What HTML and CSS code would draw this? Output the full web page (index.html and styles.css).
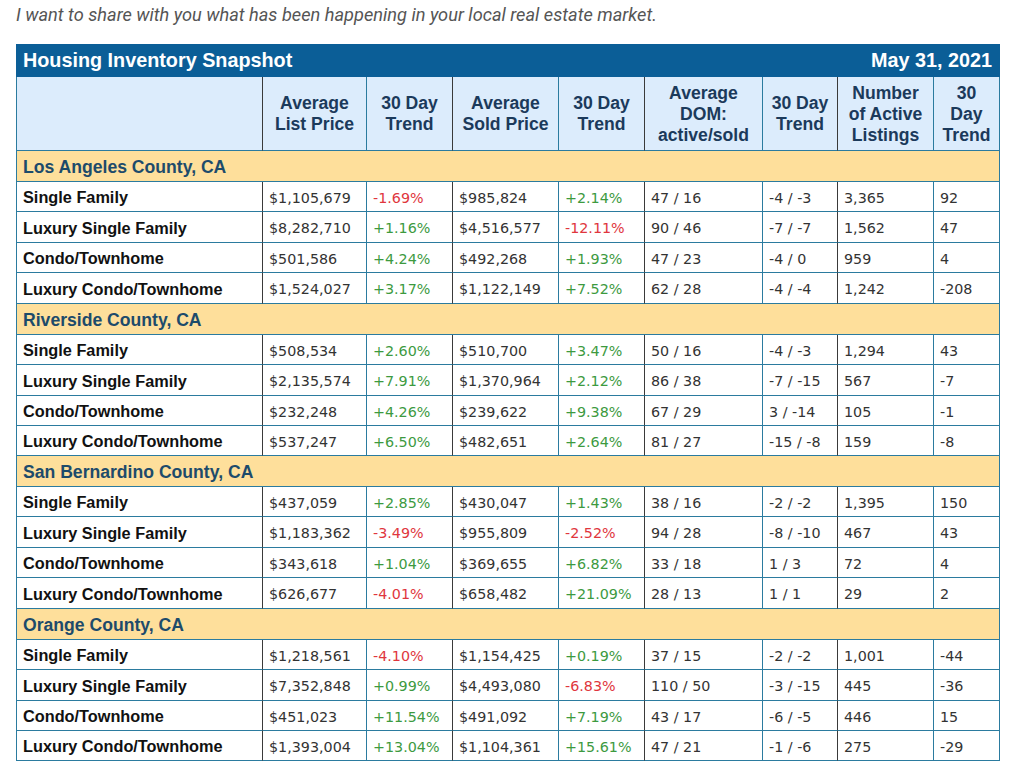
FILE: index.html
```html
<!DOCTYPE html>
<html lang="en">
<head>
<meta charset="utf-8">
<title>Housing Inventory Snapshot</title>
<link rel="stylesheet" href="styles.css">
</head>
<body>
<p class="intro">I want to share with you what has been happening in your local real estate market.</p>
<div class="snapshot">
  <div class="title-bar">
    <span>Housing Inventory Snapshot</span>
    <span>May 31, 2021</span>
  </div>
  <table class="grid">
    <colgroup>
      <col class="c1"><col class="c2"><col class="c3"><col class="c4"><col class="c5"><col class="c6"><col class="c7"><col class="c8"><col class="c9">
    </colgroup>
    <thead>
      <tr class="head">
        <th></th>
        <th>Average<br>List Price</th>
        <th>30 Day<br>Trend</th>
        <th>Average<br>Sold Price</th>
        <th>30 Day<br>Trend</th>
        <th>Average<br>DOM:<br>active/sold</th>
        <th>30 Day<br>Trend</th>
        <th>Number<br>of Active<br>Listings</th>
        <th>30<br>Day<br>Trend</th>
      </tr>
    </thead>
    <tbody>
      <tr class="section"><td colspan="9">Los Angeles County, CA</td></tr>
      <tr><td>Single Family</td><td>$1,105,679</td><td class="dn">-1.69%</td><td>$985,824</td><td class="up">+2.14%</td><td>47 / 16</td><td>-4 / -3</td><td>3,365</td><td>92</td></tr>
      <tr><td>Luxury Single Family</td><td>$8,282,710</td><td class="up">+1.16%</td><td>$4,516,577</td><td class="dn">-12.11%</td><td>90 / 46</td><td>-7 / -7</td><td>1,562</td><td>47</td></tr>
      <tr><td>Condo/Townhome</td><td>$501,586</td><td class="up">+4.24%</td><td>$492,268</td><td class="up">+1.93%</td><td>47 / 23</td><td>-4 / 0</td><td>959</td><td>4</td></tr>
      <tr><td>Luxury Condo/Townhome</td><td>$1,524,027</td><td class="up">+3.17%</td><td>$1,122,149</td><td class="up">+7.52%</td><td>62 / 28</td><td>-4 / -4</td><td>1,242</td><td>-208</td></tr>

      <tr class="section"><td colspan="9">Riverside County, CA</td></tr>
      <tr><td>Single Family</td><td>$508,534</td><td class="up">+2.60%</td><td>$510,700</td><td class="up">+3.47%</td><td>50 / 16</td><td>-4 / -3</td><td>1,294</td><td>43</td></tr>
      <tr><td>Luxury Single Family</td><td>$2,135,574</td><td class="up">+7.91%</td><td>$1,370,964</td><td class="up">+2.12%</td><td>86 / 38</td><td>-7 / -15</td><td>567</td><td>-7</td></tr>
      <tr><td>Condo/Townhome</td><td>$232,248</td><td class="up">+4.26%</td><td>$239,622</td><td class="up">+9.38%</td><td>67 / 29</td><td>3 / -14</td><td>105</td><td>-1</td></tr>
      <tr><td>Luxury Condo/Townhome</td><td>$537,247</td><td class="up">+6.50%</td><td>$482,651</td><td class="up">+2.64%</td><td>81 / 27</td><td>-15 / -8</td><td>159</td><td>-8</td></tr>

      <tr class="section"><td colspan="9">San Bernardino County, CA</td></tr>
      <tr><td>Single Family</td><td>$437,059</td><td class="up">+2.85%</td><td>$430,047</td><td class="up">+1.43%</td><td>38 / 16</td><td>-2 / -2</td><td>1,395</td><td>150</td></tr>
      <tr><td>Luxury Single Family</td><td>$1,183,362</td><td class="dn">-3.49%</td><td>$955,809</td><td class="dn">-2.52%</td><td>94 / 28</td><td>-8 / -10</td><td>467</td><td>43</td></tr>
      <tr><td>Condo/Townhome</td><td>$343,618</td><td class="up">+1.04%</td><td>$369,655</td><td class="up">+6.82%</td><td>33 / 18</td><td>1 / 3</td><td>72</td><td>4</td></tr>
      <tr><td>Luxury Condo/Townhome</td><td>$626,677</td><td class="dn">-4.01%</td><td>$658,482</td><td class="up">+21.09%</td><td>28 / 13</td><td>1 / 1</td><td>29</td><td>2</td></tr>

      <tr class="section"><td colspan="9">Orange County, CA</td></tr>
      <tr><td>Single Family</td><td>$1,218,561</td><td class="dn">-4.10%</td><td>$1,154,425</td><td class="up">+0.19%</td><td>37 / 15</td><td>-2 / -2</td><td>1,001</td><td>-44</td></tr>
      <tr><td>Luxury Single Family</td><td>$7,352,848</td><td class="up">+0.99%</td><td>$4,493,080</td><td class="dn">-6.83%</td><td>110 / 50</td><td>-3 / -15</td><td>445</td><td>-36</td></tr>
      <tr><td>Condo/Townhome</td><td>$451,023</td><td class="up">+11.54%</td><td>$491,092</td><td class="up">+7.19%</td><td>43 / 17</td><td>-6 / -5</td><td>446</td><td>15</td></tr>
      <tr><td>Luxury Condo/Townhome</td><td>$1,393,004</td><td class="up">+13.04%</td><td>$1,104,361</td><td class="up">+15.61%</td><td>47 / 21</td><td>-1 / -6</td><td>275</td><td>-29</td></tr>
    </tbody>
  </table>
</div>
</body>
</html>
```

FILE: styles.css
```css
html, body {
  margin: 0;
  padding: 0;
  background: #ffffff;
}

body {
  font-family: "Liberation Sans", Arial, sans-serif;
}

.intro {
  box-sizing: border-box;
  margin: 0;
  height: 44px;
  padding: 3px 16px 0;
  font-family: Roboto, "Liberation Sans", sans-serif;
  font-style: italic;
  font-size: 18.2px;
  line-height: 24px;
  color: #555555;
}

.snapshot {
  margin-left: 16px;
  width: 984px;
}

.title-bar {
  box-sizing: border-box;
  display: flex;
  justify-content: space-between;
  align-items: center;
  height: 33px;
  padding: 0 8px 0 7px;
  background: #0b5e97;
  color: #ffffff;
  font-family: "Liberation Sans", Arial, sans-serif;
  font-weight: bold;
  font-size: 19.8px;
}

.grid {
  border-collapse: separate;
  border-spacing: 0;
  table-layout: fixed;
  width: 984px;
}

.c1 { width: 247px; }
.c2 { width: 104px; }
.c3 { width: 86px; }
.c4 { width: 106px; }
.c5 { width: 86px; }
.c6 { width: 118px; }
.c7 { width: 75px; }
.c8 { width: 96px; }
.c9 { width: 66px; }

.grid th,
.grid td {
  box-sizing: border-box;
  border-right: 1px solid #2b7b9f;
  border-bottom: 1px solid #2b7b9f;
  padding: 2px 0 0 6px;
  vertical-align: middle;
}

.grid th:first-child,
.grid td:first-child {
  border-left: 1px solid #2b7b9f;
  padding-left: 6px;
}

.grid tr > :nth-child(odd):not(:last-child) {
  border-right-color: #3a3a3a;
}

.head {
  height: 74px;
}

.grid th {
  background: #dcecfc;
  color: #1b3a5b;
  font-family: "Liberation Sans", Arial, sans-serif;
  font-weight: bold;
  font-size: 17.6px;
  line-height: 21px;
  text-align: center;
  padding: 1px 0 0;
}

.grid tbody tr {
  height: 30px;
}

.grid tbody tr:nth-child(5n+3),
.grid tbody tr:nth-child(10n+5),
.grid tbody tr.section {
  height: 31px;
}

.grid td {
  font-family: "DejaVu Sans", Verdana, sans-serif;
  font-size: 14.3px;
  line-height: 18px;
  color: #333333;
  white-space: nowrap;
}

.grid td:first-child {
  padding-top: 2px;
  font-family: "Liberation Sans", Arial, sans-serif;
  font-weight: bold;
  font-size: 16.3px;
  line-height: 19px;
  color: #111111;
}

.grid tr.section > td {
  background: #fedf9b;
  border-right-color: #2b7b9f;
  padding-top: 2px;
  font-size: 17.6px;
  line-height: 20px;
  color: #1d4b6b;
}

.grid td.up {
  color: #3d9a3f;
}

.grid td.dn {
  color: #e0363d;
}
```
